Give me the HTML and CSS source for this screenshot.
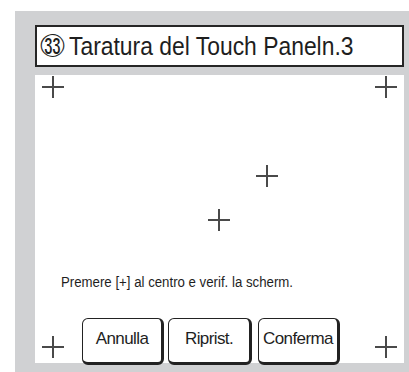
FILE: index.html
```html
<!DOCTYPE html>
<html lang="it">
<head>
<meta charset="UTF-8" />
<meta name="viewport" content="width=device-width, initial-scale=1" />
<title>Taratura del Touch Panel</title>
<link rel="stylesheet" href="styles.css">
</head>
<body>
  <div class="panel">
    <div class="title-box">
      <span class="title-num">㉝</span>
      <span class="title-text">Taratura del Touch Paneln.3</span>
    </div>

    <div class="screen">
      <span class="cross" style="left:18px; top:12px"></span>
      <span class="cross" style="left:351px; top:12px"></span>
      <span class="cross" style="left:232px; top:101px"></span>
      <span class="cross" style="left:184px; top:145px"></span>
      <span class="cross" style="left:18px; top:272px"></span>
      <span class="cross" style="left:351px; top:272px"></span>

      <p class="message">Premere [+] al centro e verif. la scherm.</p>

      <div class="buttons">
        <button class="btn">Annulla</button>
        <button class="btn">Riprist.</button>
        <button class="btn">Conferma</button>
      </div>
    </div>
  </div>
</body>
</html>
```

FILE: styles.css
```css
/* Reset & base */
* {
  box-sizing: border-box;
}
body, html {
  margin: 0;
  height: 100%;
  background: #fff;
  font-family: 'Liberation Sans', Arial, sans-serif;
  color: #1e1e1e;
  overflow: hidden;
}

/* Gray frame */
.panel {
  margin: 11px 0 0 15px;
  height: 361px;
  background: #d0d1d3;
  padding: 14px 5px 0 20px;
  display: flex;
  flex-direction: column;
  gap: 8px;
}

/* Title */
.title-box {
  height: 42px;
  border: 2px solid #262626;
  background: #fff;
  display: flex;
  align-items: center;
  padding-left: 3px;
  white-space: nowrap;
}
.title-num {
  font-family: 'DejaVu Sans', sans-serif;
  font-size: 25px;
  margin-right: 4px;
}
.title-text {
  font-size: 26px;
  display: inline-block;
  transform: scaleX(0.88);
  transform-origin: left center;
}

/* Calibration screen */
.screen {
  position: relative;
  height: 288px;
  background: #fff;
  padding: 199px 0 0 26px;
}

.cross {
  position: absolute;
  width: 22px;
  height: 22px;
  margin: -11px 0 0 -11px;
}
.cross::before,
.cross::after {
  content: "";
  position: absolute;
  background: #4a4a4a;
}
.cross::before {
  left: 0;
  top: 10px;
  width: 22px;
  height: 2px;
}
.cross::after {
  left: 10px;
  top: 0;
  width: 2px;
  height: 22px;
}

.message {
  margin: 0;
  font-size: 14px;
  line-height: 16px;
  white-space: nowrap;
  transform: scaleX(0.945);
  transform-origin: left center;
}

/* Buttons */
.buttons {
  display: flex;
  gap: 4px;
  margin: 28px 0 0 21px;
}
.btn {
  width: 82px;
  height: 47px;
  background: #fff;
  border: 1px solid #222;
  border-right-width: 3px;
  border-bottom-width: 3px;
  border-radius: 6px;
  font-family: 'Liberation Sans', Arial, sans-serif;
  font-size: 17px;
  color: #1e1e1e;
  padding: 0 0 4px;
  letter-spacing: -0.6px;
}
.btn:nth-child(2) {
  width: 84px;
}
.btn:nth-child(3) {
  margin-left: 2px;
}
```
